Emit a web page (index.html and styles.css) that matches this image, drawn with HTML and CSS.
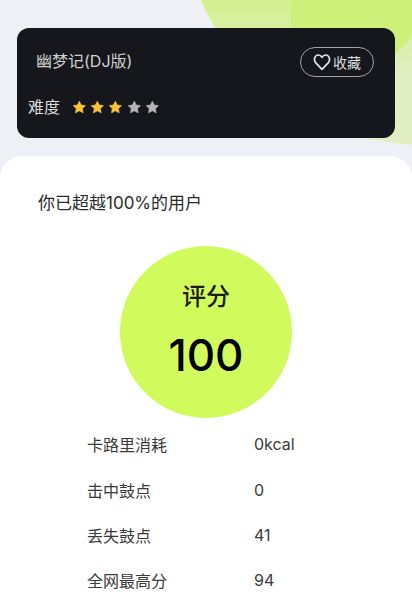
FILE: index.html
```html
<!DOCTYPE html>
<html lang="zh-CN">
<head>
<meta charset="utf-8">
<title>幽梦记(DJ版)</title>
<link rel="stylesheet" href="styles.css">
</head>
<body>
<div class="screen">
  <div class="blob blob-a"></div>
  <div class="blob blob-b"></div>
  <section class="song-card">
    <div class="song-top">
      <h1 class="song-title">幽梦记(DJ版)</h1>
      <button class="fav">
        <svg class="heart" viewBox="0 0 18 18" width="18" height="18"><path d="M9 16.4 L2.6 9.6 C0.3 6.8 1.8 2.2 5.2 2 C6.9 1.9 8.2 2.9 9 4.4 C9.8 2.9 11.1 1.9 12.8 2 C16.2 2.2 17.7 6.8 15.4 9.6 Z" fill="none" stroke="#e4e4e4" stroke-width="1.7" stroke-linejoin="round"/></svg>
        <span>收藏</span>
      </button>
    </div>
    <div class="difficulty">
      <span class="diff-label">难度</span>
      <div class="stars">
        <svg class="star on" viewBox="0 0 14 14"><path d="M7 1.2l1.8 3.6 4 .6-2.9 2.8.7 4L7 10.3l-3.6 1.9.7-4L1.2 5.4l4-.6z"/></svg>
        <svg class="star on" viewBox="0 0 14 14"><path d="M7 1.2l1.8 3.6 4 .6-2.9 2.8.7 4L7 10.3l-3.6 1.9.7-4L1.2 5.4l4-.6z"/></svg>
        <svg class="star on" viewBox="0 0 14 14"><path d="M7 1.2l1.8 3.6 4 .6-2.9 2.8.7 4L7 10.3l-3.6 1.9.7-4L1.2 5.4l4-.6z"/></svg>
        <svg class="star" viewBox="0 0 14 14"><path d="M7 1.2l1.8 3.6 4 .6-2.9 2.8.7 4L7 10.3l-3.6 1.9.7-4L1.2 5.4l4-.6z"/></svg>
        <svg class="star" viewBox="0 0 14 14"><path d="M7 1.2l1.8 3.6 4 .6-2.9 2.8.7 4L7 10.3l-3.6 1.9.7-4L1.2 5.4l4-.6z"/></svg>
      </div>
    </div>
  </section>
  <main class="panel">
    <p class="beat">你已超越100%的用户</p>
    <div class="score">
      <span class="score-label">评分</span>
      <span class="score-value">100</span>
    </div>
    <dl class="stats">
      <div class="stat"><dt>卡路里消耗</dt><dd>0kcal</dd></div>
      <div class="stat"><dt>击中鼓点</dt><dd>0</dd></div>
      <div class="stat"><dt>丢失鼓点</dt><dd>41</dd></div>
      <div class="stat"><dt>全网最高分</dt><dd>94</dd></div>
    </dl>
  </main>
</div>
</body>
</html>
```

FILE: styles.css
```css
* { box-sizing: border-box; }
html, body { margin: 0; padding: 0; }
body {
  width: 412px;
  height: 600px;
  overflow: hidden;
  background: #eef0f5;
  font-family: "Inter", "Noto Sans CJK SC", sans-serif;
}
.screen {
  position: relative;
  width: 412px;
  height: 600px;
  overflow: hidden;
  padding-top: 28px;
}
.blob { position: absolute; }
.blob-a {
  left: 179px;
  top: -347px;
  width: 492px;
  height: 492px;
  border-radius: 50%;
  background: linear-gradient(180deg, #d3ef8c 70%, #e0efc0 85%, #e1efc3 100%);
}
.blob-b {
  left: 291px;
  top: -20px;
  width: 130px;
  height: 84px;
  border-bottom-right-radius: 61px;
  background: #cdf07b;
}
.song-card {
  position: relative;
  margin: 0 17px;
  height: 110px;
  background: #16171c;
  border-radius: 12px;
  padding: 19px 21px 0 11px;
}
.song-top {
  display: flex;
  justify-content: space-between;
  align-items: center;
  height: 30px;
  padding-left: 8px;
}
.song-title {
  margin: 0 0 4px;
  font-size: 16px;
  font-weight: 400;
  color: #d0d0d0;
}
.fav {
  display: flex;
  align-items: center;
  justify-content: center;
  gap: 2px;
  width: 74px;
  height: 30px;
  padding: 0;
  background: transparent;
  border: 1px solid #a5a5a5;
  border-radius: 15px;
  color: #dcdcdc;
  font: inherit;
  font-size: 14px;
}
.heart { display: block; }
.difficulty {
  display: flex;
  align-items: center;
  gap: 12px;
  margin-top: 18px;
}
.diff-label { font-size: 16px; color: #dcdcdc; line-height: 24px; }
.stars { display: flex; gap: 3.5px; }
.star { display: block; width: 14.7px; height: 14.7px; fill: #b5b5b5; stroke: #b5b5b5; stroke-width: .7; stroke-linejoin: round; }
.star.on { fill: #f8c23a; stroke: #f8c23a; }
.panel {
  position: relative;
  margin-top: 18px;
  height: 444px;
  background: #fff;
  border-radius: 22px 22px 0 0;
  display: flex;
  flex-direction: column;
  align-items: center;
}
.beat {
  align-self: flex-start;
  flex: none;
  margin: 35px 0 0 38px;
  font-size: 17px;
  line-height: 24px;
  color: #2b2b2b;
}
.score {
  flex: none;
  margin-top: 31px;
  width: 172px;
  height: 172px;
  border-radius: 50%;
  background: #d1fa5c;
  display: flex;
  flex-direction: column;
  align-items: center;
  color: #000;
}
.score-label { margin-top: 35px; font-size: 24px; line-height: 32px; color: #1c1c1c; font-weight: 500; }
.score-value { margin-top: 14px; font-size: 44px; line-height: 56px; font-weight: 500; }
.stats {
  flex: none;
  margin: 3.6px 0 0;
  align-self: stretch;
  padding-left: 87px;
}
.stat {
  display: grid;
  grid-template-columns: 167px 1fr;
  height: 45.3px;
  align-items: center;
}
.stat dt, .stat dd { margin: 0; font-size: 16px; color: #3a3a3a; }
```
